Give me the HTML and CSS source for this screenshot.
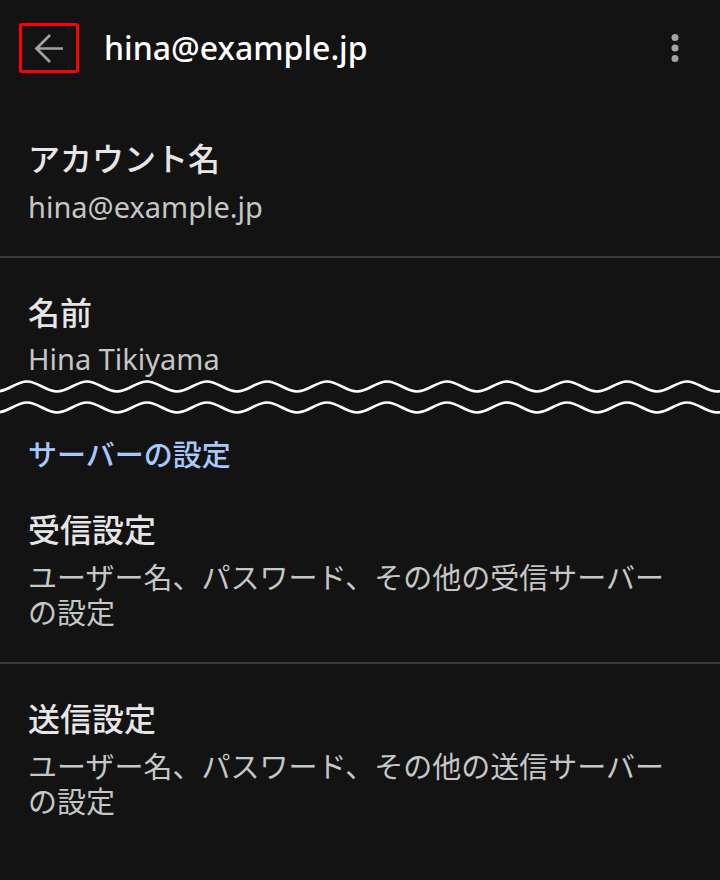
FILE: index.html
```html
<!DOCTYPE html>
<html lang="ja">
<head>
<meta charset="utf-8">
<title>hina@example.jp</title>
<link rel="stylesheet" href="styles.css">
</head>
<body>
<header class="toolbar">
  <button class="back" aria-label="戻る">
    <svg class="back-icon" viewBox="0 0 56 44" width="56" height="44">
      <path d="M15 22.5 H42 M29 9 L15.5 22.5 L29 36" fill="none" stroke="#a2a2a2" stroke-width="2.7"/>
    </svg>
  </button>
  <h1 class="title">hina@example.jp</h1>
  <button class="more" aria-label="その他">
    <svg viewBox="0 0 42 42" width="42" height="42">
      <circle cx="21" cy="10.5" r="3.5" fill="#a2a2a2"/>
      <circle cx="21" cy="21" r="3.5" fill="#a2a2a2"/>
      <circle cx="21" cy="31.5" r="3.5" fill="#a2a2a2"/>
    </svg>
  </button>
</header>
<main class="list">
  <div class="item item--first">
    <div class="item-title">アカウント名</div>
    <div class="item-sub">hina@example.jp</div>
  </div>
  <div class="item item--cut">
    <div class="item-title">名前</div>
    <div class="item-sub">Hina Tikiyama</div>
  </div>
  <div class="cut">
    <svg viewBox="0 0 720 42" width="720" height="42">
      <g fill="none" stroke="#ffffff" stroke-width="2.6">
        <path d="M -33 5.5 C -22 5.5 -14 15.5 -3 15.5 S 16 5.5 27 5.5 S 46 15.5 57 15.5 S 76 5.5 87 5.5 S 106 15.5 117 15.5 S 136 5.5 147 5.5 S 166 15.5 177 15.5 S 196 5.5 207 5.5 S 226 15.5 237 15.5 S 256 5.5 267 5.5 S 286 15.5 297 15.5 S 316 5.5 327 5.5 S 346 15.5 357 15.5 S 376 5.5 387 5.5 S 406 15.5 417 15.5 S 436 5.5 447 5.5 S 466 15.5 477 15.5 S 496 5.5 507 5.5 S 526 15.5 537 15.5 S 556 5.5 567 5.5 S 586 15.5 597 15.5 S 616 5.5 627 5.5 S 646 15.5 657 15.5 S 676 5.5 687 5.5 S 706 15.5 717 15.5 S 736 5.5 747 5.5"/>
        <path d="M -33 5.5 C -22 5.5 -14 15.5 -3 15.5 S 16 5.5 27 5.5 S 46 15.5 57 15.5 S 76 5.5 87 5.5 S 106 15.5 117 15.5 S 136 5.5 147 5.5 S 166 15.5 177 15.5 S 196 5.5 207 5.5 S 226 15.5 237 15.5 S 256 5.5 267 5.5 S 286 15.5 297 15.5 S 316 5.5 327 5.5 S 346 15.5 357 15.5 S 376 5.5 387 5.5 S 406 15.5 417 15.5 S 436 5.5 447 5.5 S 466 15.5 477 15.5 S 496 5.5 507 5.5 S 526 15.5 537 15.5 S 556 5.5 567 5.5 S 586 15.5 597 15.5 S 616 5.5 627 5.5 S 646 15.5 657 15.5 S 676 5.5 687 5.5 S 706 15.5 717 15.5 S 736 5.5 747 5.5" transform="translate(0 21)"/>
      </g>
    </svg>
  </div>
  <h2 class="section">サーバーの設定</h2>
  <div class="item item--after-section">
    <div class="item-title">受信設定</div>
    <div class="item-sub">ユーザー名、パスワード、その他の受信サーバーの設定</div>
  </div>
  <div class="item item--last">
    <div class="item-title">送信設定</div>
    <div class="item-sub">ユーザー名、パスワード、その他の送信サーバーの設定</div>
  </div>
</main>
</body>
</html>
```
FILE: styles.css
```css
html, body {
  margin: 0;
  padding: 0;
  background: #131313;
}
body {
  width: 720px;
  height: 880px;
  overflow: hidden;
  font-family: "Noto Sans", "Noto Sans CJK JP", sans-serif;
  color: #e3e3e3;
}
.toolbar {
  height: 96px;
  display: flex;
  align-items: center;
}
.back {
  margin-left: 19px;
  width: 60px;
  height: 50px;
  box-sizing: border-box;
  border: 3px solid #ff0000;
  border-radius: 3px;
  background: transparent;
  padding: 0;
  display: flex;
  align-items: center;
  justify-content: center;
}
.back-icon {
  display: block;
  flex: none;
}
.title {
  margin: 0 0 0 25px;
  flex: 1;
  font-size: 32px;
  font-weight: 500;
  line-height: 40px;
  color: #ffffff;
}
.more {
  margin-right: 24px;
  width: 42px;
  height: 42px;
  padding: 0;
  border: 0;
  background: transparent;
}
.more svg {
  display: block;
}
.item {
  padding: 33px 28px 32px;
  border-bottom: 2px solid #393939;
}
.item--first {
  padding-top: 41px;
}
.item--cut {
  padding-bottom: 0;
  border-bottom: 0;
}
.item--cut .item-sub {
  margin-top: 10px;
}
.item--after-section {
  padding-top: 37px;
}
.item--last {
  border-bottom: 0;
}
.item-title {
  font-family: "Noto Sans CJK JP", "Noto Sans", sans-serif;
  font-size: 32px;
  font-weight: 500;
  line-height: 40px;
  color: #e6e6e6;
}
.item-sub {
  margin-top: 12px;
  font-size: 29px;
  line-height: 35px;
  color: #c4c7c5;
}
.cut {
  height: 42px;
}
.cut svg {
  display: block;
}
.section {
  margin: 18px 0 0;
  padding: 0 28px;
  font-family: "Noto Sans CJK JP", "Noto Sans", sans-serif;
  font-size: 29px;
  font-weight: 500;
  line-height: 35px;
  color: #a8c7fa;
}
```
